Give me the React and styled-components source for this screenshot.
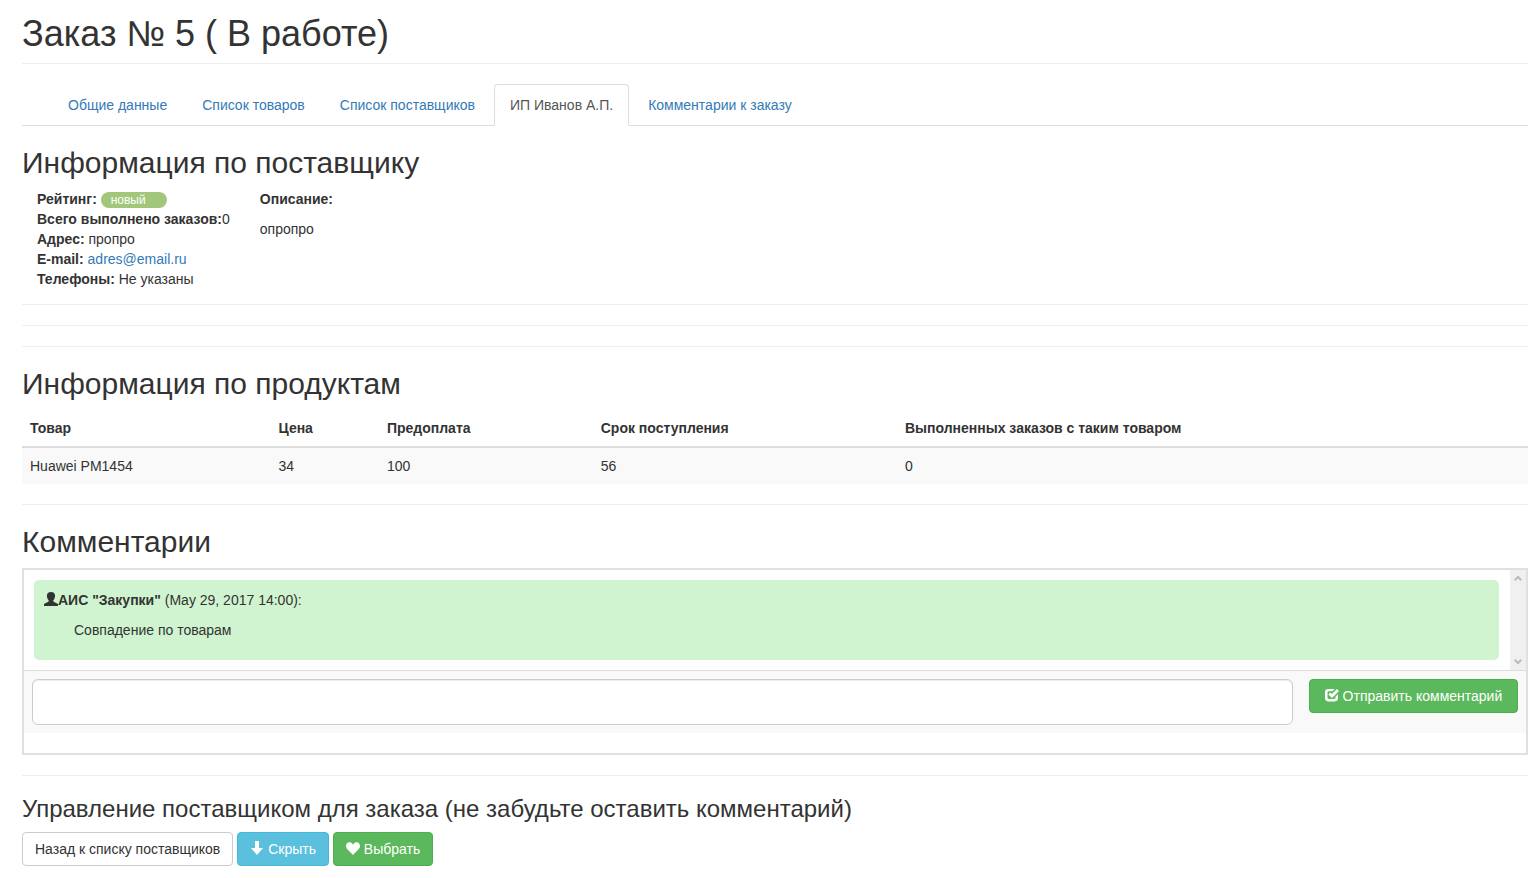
import React, { useState } from 'react'
import styled, { createGlobalStyle } from 'styled-components';


const GlobalStyle = createGlobalStyle`
  * {
    box-sizing: border-box;
  }

  body {
    margin: 0;
    background-color: #fff;
    color: #333;
    font-family: "Liberation Sans", Arial, sans-serif;
    font-size: 14px;
    line-height: 20px;
  }

  button, textarea {
    font-family: inherit;
    font-size: inherit;
    line-height: inherit;
  }
`;

const Page = styled.main`
  padding: 14px 7px 12px 22px;
`;

const PageHeader = styled.header`
  padding-bottom: 9px;
  margin-bottom: 20px;
  border-bottom: 1px solid #eee;
`;

const PageTitle = styled.h1`
  margin: 0;
  font-size: 36px;
  line-height: 40px;
  font-weight: 500;
`;

const SectionTitle = styled.h2`
  margin: 20px 0 10px;
  font-size: 30px;
  line-height: 33px;
  font-weight: 500;
`;

const SmallTitle = styled.h3`
  margin: 20px 0 10px;
  font-size: 24px;
  line-height: 26px;
  font-weight: 500;
`;

const Line = styled.hr`
  height: 1px;
  margin: 20px 0;
  border: 0;
  background-color: #eee;
`;

const Tabs = styled.nav`
  display: flex;
  gap: 3px;
  padding-left: 30px;
  border-bottom: 1px solid #ddd;
`;

const Tab = styled.a`
  padding: 10px 15px;
  margin-bottom: -1px;
  border-width: 1px;
  border-style: solid;
  border-color: ${({ $active }) => ($active ? '#ddd #ddd #fff' : 'transparent transparent #ddd')};
  border-radius: 4px 4px 0 0;
  color: ${({ $active }) => ($active ? '#555' : '#337ab7')};
  background-color: ${({ $active }) => ($active ? '#fff' : 'transparent')};
  text-decoration: none;
`;

const Supplier = styled.section`
  display: flex;
  gap: 30px;
  padding: 0 15px 15px;

  & + hr {
    margin-top: 0;
  }
`;

const Description = styled.p`
  margin: 10px 0;
`;

const Badge = styled.span`
  display: inline-block;
  width: 66px;
  height: 16px;
  padding: 0 10px;
  border-radius: 8px;
  background-color: #a2c77b;
  color: #fff;
  font-size: 12px;
  line-height: 16px;
  vertical-align: middle;
`;

const MailLink = styled.a`
  color: #337ab7;
  text-decoration: none;
`;

const Table = styled.table`
  width: 100%;
  table-layout: fixed;
  border-spacing: 0;

  th, td {
    padding: 8px;
    text-align: left;
  }

  th {
    border-bottom: 2px solid #ddd;
  }

  td {
    background-color: #f9f9f9;
  }
`;

const HeadCell = styled.th`
  width: ${({ $width }) => $width};
`;

const Chat = styled.section`
  padding-bottom: 20px;
  border: 2px solid #e0e0e0;
`;

const Messages = styled.div`
  display: flex;
  height: 100px;
`;

const MessageList = styled.div`
  flex: 1;
  padding: 10px 11px 10px 10px;
`;

const Message = styled.article`
  height: 80px;
  padding: 10px;
  border-radius: 5px;
  background-color: #d0f4d0;
`;

const MessageText = styled.p`
  margin: 10px 0 0 30px;
`;

const Scroll = styled.div`
  display: flex;
  flex-direction: column;
  justify-content: space-between;
  align-items: center;
  width: 16px;
  padding: 5px 0;
  background-color: #f0f0f0;
`;

const ChatForm = styled.form`
  display: flex;
  align-items: flex-start;
  gap: 16px;
  padding: 8px;
  border-top: 1px solid #ddd;
  background-color: #f9f9f9;

  button {
    min-width: 209px;
  }
`;

const CommentInput = styled.textarea`
  flex: 1;
  height: 46px;
  padding: 6px 12px;
  border: 1px solid #ccc;
  border-radius: 6px;
  background-color: #fff;
  box-shadow: inset 0 1px 1px rgba(0, 0, 0, 0.075);
  color: #555;
  resize: none;
`;

const colors = {
  default: ['#fff', '#ccc', '#333'],
  info: ['#5bc0de', '#46b8da', '#fff'],
  success: ['#5cb85c', '#4cae4c', '#fff'],
}

const Button = styled.button`
  padding: 6px 12px;
  border: 1px solid ${({ $kind }) => colors[$kind][1]};
  border-radius: 4px;
  background-color: ${({ $kind }) => colors[$kind][0]};
  color: ${({ $kind }) => colors[$kind][2]};
  white-space: nowrap;
  cursor: pointer;
`;

const Buttons = styled.div`
  display: flex;
  gap: 4px;
`;

const Glyph = styled.svg`
  width: 14px;
  height: 14px;
  fill: currentColor;
  vertical-align: -1px;
`;

const Arrow = styled.svg`
  width: 8px;
  height: 7px;
  fill: none;
  stroke: #bbb;
  stroke-width: 2;
`;

const icons = {
  user: 'M7 0C4.300 0 2.900 1.500 2.900 3.700C2.900 5.600 3.600 7.200 4.700 8.200V9C4.700 9.500 4.400 9.800 3.900 10L1.200 11.200C.4 11.600 0 12 0 12.800V14H14V12.800C14 12 13.600 11.600 12.800 11.200L10.100 10C9.600 9.800 9.300 9.500 9.300 9V8.200C10.400 7.200 11.100 5.600 11.100 3.700C11.100 1.500 9.700 0 7 0Z',
  check: 'M3.200 1H9.600L7.500 3.300H3.800Q2.500 3.300 2.500 4.600V9.600Q2.500 10.900 3.800 10.900H9.200Q10.500 10.900 10.500 9.600V8.800L13 6.300V10.100Q13 13.400 9.700 13.400H3.300Q0 13.400 0 10.100V4.300Q0 1 3.200 1ZM11.900 1L14 3.100L7 10.100L3.400 6.500L5.500 4.400L7 5.900Z',
  down: 'M5 0H9V7H13L7 14L1 7H5Z',
  heart: 'M7 3.800C8 1.800 9.300 1.200 10.500 1.200C12.600 1.200 14 2.800 14 4.900C14 8.200 9.800 10.200 7 13.900C4.200 10.200 0 8.200 0 4.900C0 2.800 1.400 1.200 3.500 1.200C4.700 1.200 6 1.800 7 3.800Z',
}

function Icon( { name } ) {
  return (
    <Glyph viewBox="0 0 14 14" aria-hidden="true">
      <path d={icons[name]} />
    </Glyph>
  )
}

const tabs = ['Общие данные', 'Список товаров', 'Список поставщиков', 'ИП Иванов А.П.', 'Комментарии к заказу']

const products = [
  { name: 'Huawei PM1454', price: 34, prepay: 100, term: 56, done: 0 },
]

function App() {

  const [active, setActive] = useState(3)
  const [comment, setComment] = useState('')

  return (
    <Page>
      <GlobalStyle />

      <PageHeader>
        <PageTitle>Заказ № 5 ( В работе)</PageTitle>
      </PageHeader>

      <Tabs>
        {tabs.map((el, idx) => (
          <Tab key={el} href='#' $active={idx === active} onClick={() => setActive(idx)}>{el}</Tab>
        ))}
      </Tabs>

      <SectionTitle>Информация по поставщику</SectionTitle>
      <Supplier>
        <div>
          <div><b>Рейтинг:</b> <Badge>новый</Badge></div>
          <div><b>Всего выполнено заказов:</b>0</div>
          <div><b>Адрес:</b> пропро</div>
          <div><b>E-mail:</b> <MailLink href='mailto:adres@email.ru'>adres@email.ru</MailLink></div>
          <div><b>Телефоны:</b> Не указаны</div>
        </div>
        <div>
          <b>Описание:</b>
          <Description>опропро</Description>
        </div>
      </Supplier>
      <Line />
      <Line />
      <Line />

      <SectionTitle>Информация по продуктам</SectionTitle>
      <Table>
        <thead>
          <tr>
            <HeadCell $width='16.5%'>Товар</HeadCell>
            <HeadCell $width='7.2%'>Цена</HeadCell>
            <HeadCell $width='14.2%'>Предоплата</HeadCell>
            <HeadCell $width='20.2%'>Срок поступления</HeadCell>
            <HeadCell $width='auto'>Выполненных заказов с таким товаром</HeadCell>
          </tr>
        </thead>
        <tbody>
          {products.map((el) => (
            <tr key={el.name}>
              <td>{el.name}</td>
              <td>{el.price}</td>
              <td>{el.prepay}</td>
              <td>{el.term}</td>
              <td>{el.done}</td>
            </tr>
          ))}
        </tbody>
      </Table>
      <Line />

      <SectionTitle>Комментарии</SectionTitle>
      <Chat>
        <Messages>
          <MessageList>
            <Message>
              <div><Icon name='user' /><b>АИС "Закупки"</b> (May 29, 2017 14:00):</div>
              <MessageText>Совпадение по товарам</MessageText>
            </Message>
          </MessageList>
          <Scroll aria-hidden="true">
            <Arrow viewBox="0 0 8 7"><path d="M.7 5.300L4 2L7.300 5.300" /></Arrow>
            <Arrow viewBox="0 0 8 7"><path d="M.7 1.700L4 5L7.300 1.700" /></Arrow>
          </Scroll>
        </Messages>
        <ChatForm onSubmit={(e) => e.preventDefault()}>
          <CommentInput aria-label='Комментарий' value={comment} onChange={(e) => setComment(e.target.value)} />
          <Button type='submit' $kind='success'><Icon name='check' /> Отправить комментарий</Button>
        </ChatForm>
      </Chat>
      <Line />

      <SmallTitle>Управление поставщиком для заказа (не забудьте оставить комментарий)</SmallTitle>
      <Buttons>
        <Button type='button' $kind='default'>Назад к списку поставщиков</Button>
        <Button type='button' $kind='info'><Icon name='down' /> Скрыть</Button>
        <Button type='button' $kind='success'><Icon name='heart' /> Выбрать</Button>
      </Buttons>
    </Page>
  )
}

export default App
